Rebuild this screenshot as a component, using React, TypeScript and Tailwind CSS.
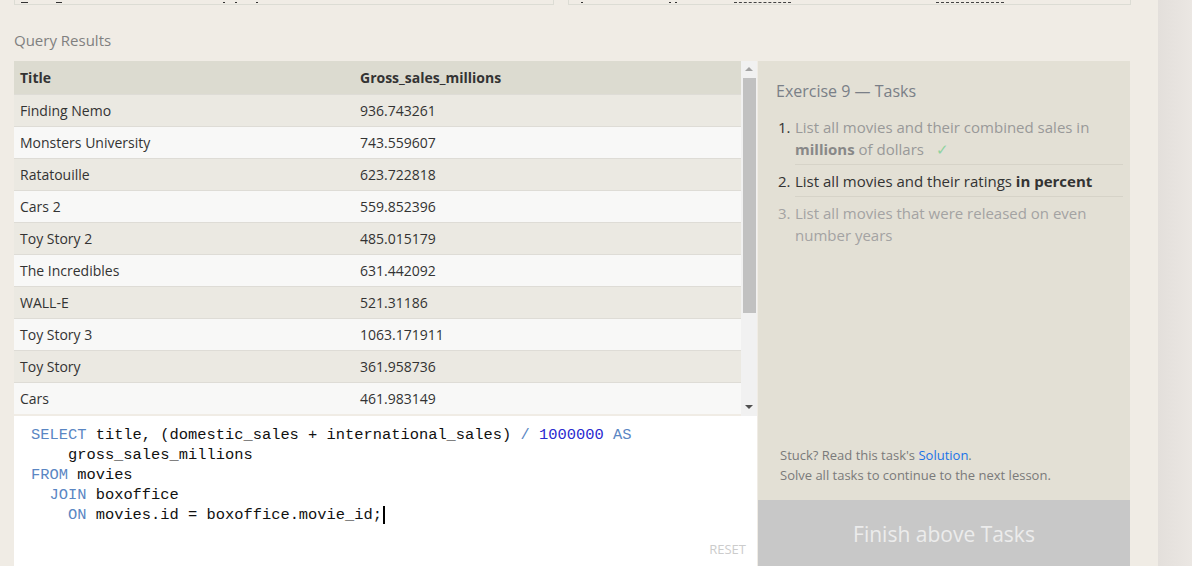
const rows = [
  { title: "Finding Nemo", gross: "936.743261" },
  { title: "Monsters University", gross: "743.559607" },
  { title: "Ratatouille", gross: "623.722818" },
  { title: "Cars 2", gross: "559.852396" },
  { title: "Toy Story 2", gross: "485.015179" },
  { title: "The Incredibles", gross: "631.442092" },
  { title: "WALL-E", gross: "521.31186" },
  { title: "Toy Story 3", gross: "1063.171911" },
  { title: "Toy Story", gross: "361.958736" },
  { title: "Cars", gross: "461.983149" },
];

const ui = "font-['Segoe_UI','Open_Sans',sans-serif]";
const mono = "font-['Consolas','Liberation_Mono',monospace]";

const Kw = ({ children }: { children: React.ReactNode }) => (
  <span className="text-[#5a86c3]">{children}</span>
);

// glyph bottoms of the table above, scrolled almost out of view: [left offset, width, dashed]
const Marks = ({ xs }: { xs: [number, number, boolean?][] }) => (
  <div className="relative h-[4px]">
    {xs.map(([x, w, dashed], i) => (
      <div
        key={i}
        style={{ left: x, width: w }}
        className={`absolute bottom-[1px] ${dashed ? "border-b border-dashed border-[#444]" : "h-[1px] bg-[#333]"}`}
      />
    ))}
  </div>
);

const TopStrip = () => (
  <div className="flex gap-[14px] pl-[14px]">
    <div className="h-[5px] w-[540px] border-x border-b border-[#dcdcd4]">
      <Marks xs={[[6, 7], [41, 6], [208, 2], [220, 2], [241, 2]]} />
    </div>
    <div className="h-[5px] w-[563px] border-x border-b border-[#dcdcd4]">
      <Marks xs={[[12, 2], [100, 2], [106, 2], [165, 57, true], [367, 68, true]]} />
    </div>
  </div>
);

const ResultsTable = () => (
  <div className="flex h-[355px]">
    <div className="flex-1 overflow-hidden">
      <div className="flex h-[33px] items-center bg-[#dcdbd0] text-[14px] font-bold text-[#333]">
        <div className="w-[340px] pl-[6px]">Title</div>
        <div className="pl-[6px]">Gross_sales_millions</div>
      </div>
      {rows.map((r, i) => (
        <div
          key={r.title}
          className={`flex h-[32px] items-center border-t border-[#dedcd6] text-[14px] text-[#333] ${
            i % 2 === 0 ? "bg-[#ebe9e2]" : "bg-[#f8f8f7]"
          }`}
        >
          <div className="w-[340px] pl-[6px]">{r.title}</div>
          <div className="pl-[6px]">{r.gross}</div>
        </div>
      ))}
    </div>
    <div className="flex w-[16px] flex-col items-center bg-[#f1f1f1]">
      <div className="mt-[6px] h-0 w-0 border-x-[4px] border-b-[4px] border-x-transparent border-b-[#a3a3a3]" />
      <div className="mt-[7px] h-[235px] w-[13px] bg-[#c1c1c1]" />
      <div className="mt-auto mb-[7px] h-0 w-0 border-x-[4px] border-t-[4px] border-x-transparent border-t-[#505050]" />
    </div>
  </div>
);

const Editor = () => (
  <div className="flex h-[150px] flex-col bg-white">
    <pre className={`${mono} pl-[17px] pt-[9px] text-[15.4px] leading-[20px] text-[#111]`}>
      <Kw>SELECT</Kw> title, (domestic_sales + international_sales) <Kw>/</Kw>{" "}
      <span className="text-[#2a2ad0]">1000000</span> <Kw>AS</Kw>
      {"\n    gross_sales_millions\n"}
      <Kw>FROM</Kw> movies{"\n  "}
      <Kw>JOIN</Kw> boxoffice{"\n    "}
      <Kw>ON</Kw> movies.id = boxoffice.movie_id
      <span className="border-r-2 border-black pr-[1px]">;</span>
    </pre>
    <div className={`${ui} mt-auto mb-[7px] self-end pr-[11px] text-[13px] text-[#cccccc]`}>RESET</div>
  </div>
);

const TasksPanel = () => (
  <div className="flex w-[372px] flex-col">
    <div className="flex flex-1 flex-col bg-[#e3e0d5] pt-[19px]">
      <h3 className="pl-[18px] text-[16px] leading-[22px] text-[#7a7f87]">Exercise 9 — Tasks</h3>
      <ol className="mt-[14px] pl-[20px] pr-[7px] text-[15px] leading-[22px]">
        <li className="flex">
          <span className="w-[17px] text-[#333]">1.</span>
          <div className="flex-1 border-b border-[#d6d3c8] pb-[4px] text-[#999]">
            List all movies and their combined sales in <b className="text-[#888]">millions</b> of dollars
            <span className="ml-[12px] text-[#8fd3a0]">✓</span>
          </div>
        </li>
        <li className="flex pt-[5px]">
          <span className="w-[17px] text-[#333]">2.</span>
          <div className="flex-1 border-b border-[#d6d3c8] pb-[4px] text-[#333]">
            List all movies and their ratings <b>in percent</b>
          </div>
        </li>
        <li className="flex pt-[5px] text-[#a3a3a3]">
          <span className="w-[17px]">3.</span>
          <div className="flex-1 pr-[20px]">List all movies that were released on even number years</div>
        </li>
      </ol>
      <div className="mt-auto pb-[15px] pl-[22px] text-[13px] leading-[20px] text-[#7a7a7a]">
        <p>
          Stuck? Read this task's <span className="text-[#1a73e8]">Solution</span>.
        </p>
        <p>Solve all tasks to continue to the next lesson.</p>
      </div>
    </div>
    <button className="flex h-[66px] items-center justify-center bg-[#c8c8c8] pt-[4px] text-[21px] text-[#ececec]">
      Finish above Tasks
    </button>
  </div>
);

export default function App() {
  return (
    <div className={`${ui} flex h-[566px] w-[1192px] overflow-hidden bg-[#f0ece5]`}>
      <div className="flex w-[1158px] flex-col">
        <TopStrip />
        <div className="ml-[14px] mt-[25px] text-[15px] leading-[20px] text-[#808080]">Query Results</div>
        <div className="ml-[14px] mt-[11px] flex gap-[1px]">
          <div className="flex w-[743px] flex-col">
            <ResultsTable />
            <Editor />
          </div>
          <TasksPanel />
        </div>
      </div>
      <div className="flex-1 bg-gradient-to-r from-[#e3dfdb] to-[#ebe7e3]" />
    </div>
  );
}
